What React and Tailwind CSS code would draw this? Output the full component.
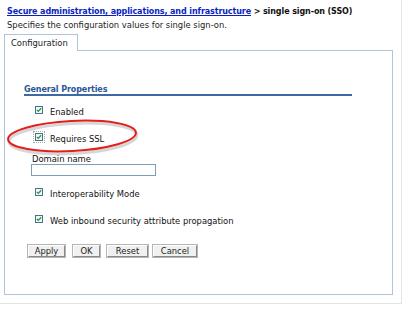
import React from "react";

const font = { fontFamily: '"DejaVu Sans", Verdana, sans-serif' };

function Check({ focused }) {
  return (
    <span className={focused ? "block outline outline-1 outline-dotted outline-[#aaa] outline-offset-[1px]" : "block"}>
      <svg className="block" width="8" height="8" viewBox="0 0 8 8">
        <rect x="0.5" y="0.5" width="7" height="7" fill="#f4f7f9" stroke="#4a7096" />
        <path d="M1.8 3.9 L3.3 5.4 L6.2 2.3" fill="none" stroke="#21a121" strokeWidth="1.3" />
      </svg>
    </span>
  );
}

function Row({ label, focused, className }) {
  return (
    <div className={"flex items-start pl-[30px] h-[10px] leading-none " + className}>
      <Check focused={focused} />
      <span className="ml-[7px] mt-[2px] text-[8.4px] leading-[9px] text-[#111] whitespace-nowrap">{label}</span>
    </div>
  );
}

function Btn({ children, w }) {
  return (
    <button
      className={
        "block h-[12px] bg-[#f0f0f0] border border-t-[#fff] border-l-[#fff] border-r-[#8a8a8a] border-b-[#8a8a8a] outline outline-1 outline-[#b5b5b5] text-[8.4px] leading-[10px] text-[#222] " +
        w
      }
    >
      {children}
    </button>
  );
}

export default function App() {
  return (
    <div className="relative w-[409px] h-[319px] bg-white overflow-hidden leading-none" style={font}>
      <div className="w-[402px] h-[304px] border-r border-b border-[#e4e4e4] pt-[7px]">
        <div className="pl-[7px] text-[8px] tracking-[-0.1px] leading-[10px] font-bold text-[#111] whitespace-nowrap">
          <a className="text-[#0b1fbf] underline">Secure administration, applications, and infrastructure</a>
          {" > single sign-on (SSO)"}
        </div>
        <div className="pl-[7px] mt-[3px] text-[8.4px] leading-[10px] text-[#222] whitespace-nowrap">
          Specifies the configuration values for single sign-on.
        </div>
        <div className="relative z-10 ml-[4px] mt-[4px] -mb-px w-[74px] h-[17px] border border-b-0 border-[#b0c4de] bg-white pl-[6px] pt-[4px] text-[8.4px] leading-[9px] text-[#222]">
          Configuration
        </div>
        <div className="ml-[4px] w-[389px] h-[245px] border border-[#b0c4de] pt-[34px]">
          <div className="ml-[19px] w-[328px] border-b-2 border-[#3d69a5] text-[8px] tracking-[-0.1px] leading-[9px] font-bold text-[#2a5796]">
            General Properties
          </div>
          <Row label="Enabled" className="mt-[10px]" />
          <Row label="Requires SSL" focused className="mt-[17px]" />
          <div className="pl-[27px] mt-[12px] text-[8.4px] leading-[9px] text-[#111]">Domain name</div>
          <div className="ml-[26px] w-[125px] h-[12px] border border-[#7f9db9] bg-white" />
          <Row label="Interoperability Mode" className="mt-[12px]" />
          <Row label="Web inbound security attribute propagation" className="mt-[17px]" />
          <div className="flex mt-[20px]">
            <div className="ml-[23px]"><Btn w="w-[37px]">Apply</Btn></div>
            <div className="ml-[8px]"><Btn w="w-[27px]">OK</Btn></div>
            <div className="ml-[7px]"><Btn w="w-[41px]">Reset</Btn></div>
            <div className="ml-[5px]"><Btn w="w-[44px]">Cancel</Btn></div>
          </div>
        </div>
      </div>
      <svg className="absolute left-0 top-0 pointer-events-none" width="409" height="319">
        <ellipse cx="73" cy="138.5" rx="64" ry="15" fill="none" stroke="#999" strokeOpacity="0.4" strokeWidth="3" transform="rotate(-3 73 139)" />
        <ellipse cx="72" cy="136" rx="64" ry="15" fill="none" stroke="#e0201c" strokeWidth="2" transform="rotate(-3 72 136)" />
      </svg>
    </div>
  );
}
